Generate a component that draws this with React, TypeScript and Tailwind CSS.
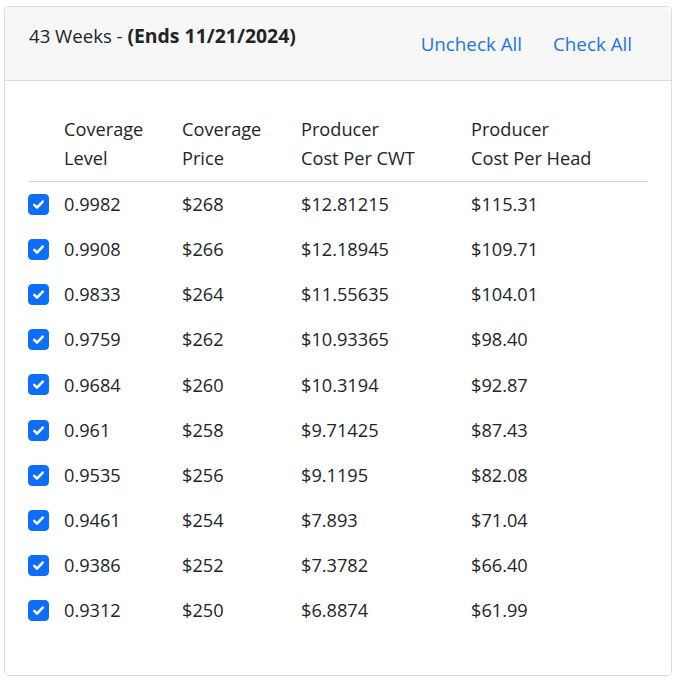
import React, { useState } from "react";

const rows = [
  { level: "0.9982", price: "$268", cwt: "$12.81215", head: "$115.31" },
  { level: "0.9908", price: "$266", cwt: "$12.18945", head: "$109.71" },
  { level: "0.9833", price: "$264", cwt: "$11.55635", head: "$104.01" },
  { level: "0.9759", price: "$262", cwt: "$10.93365", head: "$98.40" },
  { level: "0.9684", price: "$260", cwt: "$10.3194", head: "$92.87" },
  { level: "0.961", price: "$258", cwt: "$9.71425", head: "$87.43" },
  { level: "0.9535", price: "$256", cwt: "$9.1195", head: "$82.08" },
  { level: "0.9461", price: "$254", cwt: "$7.893", head: "$71.04" },
  { level: "0.9386", price: "$252", cwt: "$7.3782", head: "$66.40" },
  { level: "0.9312", price: "$250", cwt: "$6.8874", head: "$61.99" },
];

const cols = "grid grid-cols-[35px_118px_119px_170px_1fr]";

function Checkbox({ checked, onChange }: { checked: boolean; onChange: () => void }) {
  return (
    <button
      onClick={onChange}
      className={
        "ml-[-1px] flex h-[21px] w-[21px] items-center justify-center rounded-[4px] border " +
        (checked ? "border-[#0d6efd] bg-[#0d6efd]" : "border-[#b9bec4] bg-white")
      }
    >
      {checked && (
        <svg viewBox="0 0 20 20" className="h-[17px] w-[17px]" fill="none">
          <path d="M5 10.5l3.2 3.2L15 6.5" stroke="white" strokeWidth="3" strokeLinecap="round" strokeLinejoin="round" />
        </svg>
      )}
    </button>
  );
}

export default function App() {
  const [checked, setChecked] = useState(rows.map(() => true));

  return (
    <div className="bg-white pl-[4px] pt-[6px] font-['Open_Sans',sans-serif] text-[18.2px] leading-[28.8px] text-[#212529]">
      <div className="h-[670px] w-[668px] overflow-hidden rounded-[5px] border border-[#dcdcdc]">
        <div className="flex h-[74px] items-start justify-between border-b border-[#dcdcdc] bg-[#f7f7f7] pl-6 pr-[39px]">
          <div className="pt-[15px] text-[18.6px]">
            43 Weeks - <span className="text-[19.4px] font-bold">(Ends 11/21/2024)</span>
          </div>
          <div className="flex gap-[31px] pt-[23px] text-[18.8px] text-[#1f74e6]">
            <button onClick={() => setChecked(rows.map(() => false))}>Uncheck All</button>
            <button onClick={() => setChecked(rows.map(() => true))}>Check All</button>
          </div>
        </div>
        <div className="pl-6 pr-[23px] pt-[26px]">
          <div className={cols + " border-b border-[#d2d6da] pb-[8px] pt-[8px]"}>
            <div />
            <div>Coverage<br />Level</div>
            <div>Coverage<br />Price</div>
            <div>Producer<br />Cost Per CWT</div>
            <div>Producer<br />Cost Per Head</div>
          </div>
          {rows.map((r, i) => (
            <div key={r.level} className={cols + " h-[45.2px] items-center"}>
              <Checkbox
                checked={checked[i]}
                onChange={() => setChecked(checked.map((c, j) => (j === i ? !c : c)))}
              />
              <div>{r.level}</div>
              <div>{r.price}</div>
              <div>{r.cwt}</div>
              <div>{r.head}</div>
            </div>
          ))}
        </div>
      </div>
    </div>
  );
}
